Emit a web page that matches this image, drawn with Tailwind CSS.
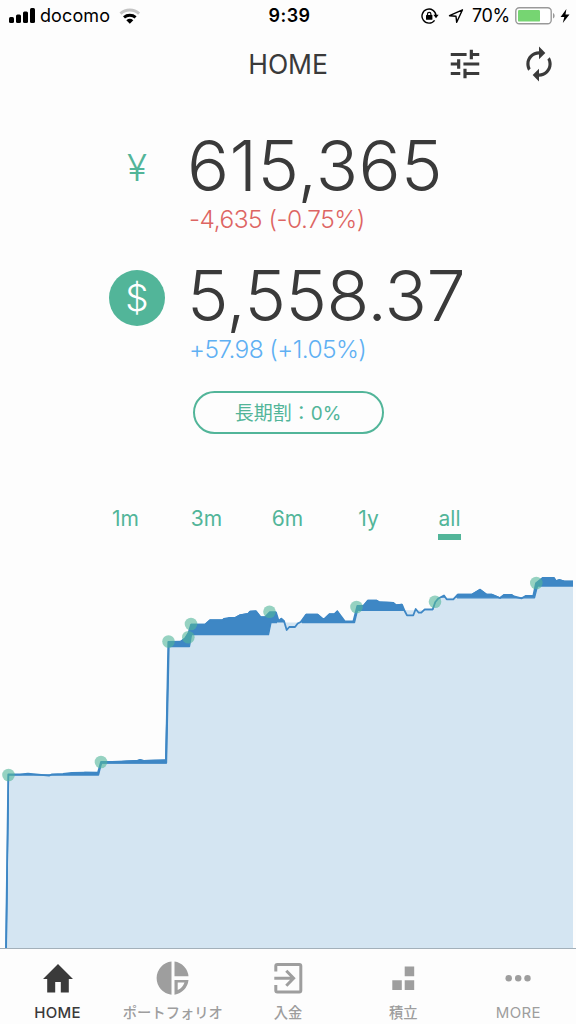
<!DOCTYPE html>
<html lang="ja">

<head>
    <meta charset="UTF-8">
    <meta name="viewport" content="width=device-width, initial-scale=1.0">
    <script src="https://cdn.jsdelivr.net/npm/@tailwindcss/browser@4"></script>
    <title>HOME</title>
</head>

<body class="bg-[#fdfdfd] font-['Inter','Noto_Sans_CJK_JP',sans-serif] text-[#3a3a3a]">
    <div class="flex flex-col w-[576px] h-[1024px] overflow-hidden">
        <!-- Status bar -->
        <div class="grid grid-cols-[1fr_auto_1fr] items-center h-8 pl-2 pr-1.5 text-black shrink-0">
            <div class="flex items-center">
                <svg class="w-7 h-4" viewBox="0 0 28 16">
                    <rect x="1" y="9" width="5" height="6" rx="1.5" />
                    <rect x="8" y="6.500" width="5" height="8.500" rx="1.500" />
                    <rect x="15" y="3.500" width="5" height="11.500" rx="1.500" />
                    <rect x="22" y="0" width="5" height="15" rx="1.500" />
                </svg>
                <span class="ml-1 w-[74px] text-[18px] tracking-[0.1px] leading-none">docomo</span>
                <svg class="ml-1 w-6 h-4" viewBox="0 0 24 16" fill="none">
                    <path d="M2.500 5.600a14 14 0 0 1 18.600 0" stroke="#c4c4c4" stroke-width="3" />
                    <path d="M6 9.400a9 9 0 0 1 11.600 0" stroke="#000" stroke-width="3" />
                    <path d="M8.300 12.300a5.400 5.400 0 0 1 7 0L11.800 15.800z" fill="#000" />
                </svg>
            </div>
            <div class="pl-px text-[18px] font-semibold leading-none tracking-[0.4px]">9:39</div>
            <div class="flex items-center justify-end">
                <svg class="w-[18px] h-4" viewBox="0 0 18 16" fill="none">
                    <path d="M13.600 12.300A7 7 0 1 1 15 8" stroke="#000" stroke-width="1.400" />
                    <path d="M12.400 6.800h5.200L15 10.200z" fill="#000" />
                    <rect x="5" y="7" width="6.400" height="4.800" rx=".6" fill="#000" />
                    <path d="M6.500 7.500V6a1.700 1.700 0 0 1 3.400 0v1.500" stroke="#000" stroke-width="1.200" />
                </svg>
                <svg class="ml-[9px] w-4 h-4" viewBox="0 0 16 16" fill="none">
                    <path d="M14.500 1.800L1.500 7.700l6.500.600.700 6z" stroke="#000" stroke-width="1.400" stroke-linejoin="round" />
                </svg>
                <span class="ml-2 text-[18px] leading-none tracking-[-0.3px]">70%</span>
                <svg class="ml-[5px] w-[41px] h-[18px]" viewBox="0 0 41 18">
                    <rect x=".8" y=".8" width="35.400" height="16" rx="3.500" fill="#fff" stroke="#999" stroke-width="1.400" />
                    <rect x="3" y="3" width="22" height="11.600" rx="1.200" fill="#76d572" />
                    <path d="M38 6v5.600c2.200-1 2.200-4.600 0-5.600z" fill="#999" />
                </svg>
                <svg class="ml-1 w-[10px] h-4" viewBox="0 0 10 16">
                    <path d="M6.400 1L.6 9h3.700L2.800 15 9.500 6.600H5.500z" />
                </svg>
            </div>
        </div>

        <!-- Header -->
        <div class="grid grid-cols-3 items-center h-16 shrink-0">
            <div></div>
            <h1 class="text-center text-[26.500px] tracking-[-0.1px] mt-px">HOME</h1>
            <div class="flex items-center justify-end pr-[18px] gap-[36px]">
                <svg class="w-[38px] h-[38px]" viewBox="0 0 24 24" fill="#3a3a3a">
                    <path d="M3 17v2h6v-2H3zM3 5v2h10V5H3zm10 16v-2h8v-2h-8v-2h-2v6h2zM7 9v2H3v2h4v2h2V9H7zm14 4v-2H11v2h10zm-6-4h2V7h4V5h-4V3h-2v6z" />
                </svg>
                <svg class="w-[38px] h-[38px]" viewBox="0 0 24 24" fill="#3a3a3a">
                    <path d="M12 6v3l4-4-4-4v3c-4.420 0-8 3.580-8 8 0 1.570.46 3.030 1.240 4.260L6.700 14.800A5.870 5.870 0 0 1 6 12c0-3.310 2.690-6 6-6zm6.760 1.740L17.300 9.200c.44.84.7 1.790.7 2.800 0 3.310-2.690 6-6 6v-3l-4 4 4 4v-3c4.420 0 8-3.580 8-8 0-1.570-.46-3.030-1.240-4.260z" />
                </svg>
            </div>
        </div>

        <!-- Balances -->
        <div class="flex h-[130px] pt-[34px] shrink-0">
            <div class="ml-[109px] mt-[10px] flex items-center justify-center w-14 h-14 text-[37px] font-light text-[#52b599]">¥</div>
            <div class="ml-[22px]">
                <div class="h-[72px] text-[70px] leading-[72px] font-light tracking-[0.400px] whitespace-nowrap">615,365</div>
                <div class="ml-[2px] mt-[5px] text-[24.500px] leading-[24px] font-light tracking-[-0.500px] text-[#dd6563]">-4,635 (-0.75%)</div>
            </div>
        </div>
        <div class="flex h-[165px] pt-[34px] shrink-0">
            <div class="ml-[109px] mt-[10px] flex items-center justify-center w-14 h-14 rounded-full bg-[#52b599] text-[37px] font-light text-white">$</div>
            <div class="ml-[22px]">
                <div class="h-[72px] text-[70px] leading-[72px] font-light tracking-[-0.500px] whitespace-nowrap">5,558.37</div>
                <div class="ml-[2px] mt-[5px] text-[24.500px] leading-[24px] font-light tracking-[-0.600px] text-[#5fb0f3]">+57.98 (+1.05%)</div>
            </div>
        </div>
        <div class="flex justify-center h-[44px] shrink-0">
            <div class="flex items-center justify-center w-[191px] h-[43px] pt-[3px] border-2 border-[#52b599] rounded-full text-[19px] text-[#52b599]">長期割：0%</div>
        </div>

        <!-- Range tabs -->
        <div class="flex justify-center mt-[70px] pr-px h-[56px] text-[21px] leading-[28px] text-[#52b599] shrink-0">
            <div class="w-[81px] text-center">1m</div>
            <div class="w-[81px] text-center">3m</div>
            <div class="w-[81px] text-center">6m</div>
            <div class="w-[81px] text-center">1y</div>
            <div class="w-[81px] flex flex-col items-center">all<span class="mt-[1px] w-[23px] h-[6px] bg-[#52b599]"></span></div>
        </div>

        <!-- Chart -->
        <svg class="w-[576px] h-[387px] shrink-0" viewBox="0 561 576 387">
            <!-- value -->
            <path fill="#3e87c5" d="M6 948L8.300 774.300H20L28 773.700 49 775.700 52 774.300 63 774 72 772.500 82 772.300 85 771.800 98 772 101 762H112L126 760.500 137 760 140 759 144 760 165 759.300 168.300 641 180.700 640.700 185 637.500 188.500 632 191 623.700H205L210 619.300H222.500L224 618 227 618.700 229.300 617H235L240 614.300 248 613 250 610.700 256 610.300 260.700 616.300H265L269.500 611.500H276L278.700 621 281.300 617.700 284 621 286.700 630 289.300 627H295L297.700 623.500 300.700 622 306 613.700H317.700L322.700 618H324.500L329.300 613.300H334.300L337.300 610.300 345 621.500H353.300L357.300 606 363.300 605 367.700 599.700H376.700L379.300 601.300 393.300 602 396 604.300 402 603.700 404.700 611 407 615.300H413.300L415.700 609 418.700 612.700H421.300L424.700 609.300H432.700L435.300 602 438.300 598.500 444 595 446.700 599.300H453.300L457.700 593.700H471.700L480 588.700 486.700 593.700H491.700L500 597.300 504 594H511.700L514 596 521.700 598.300 526 595.300H533.300L536 583.300 542.700 577H554L556 580.300 559.300 579 565 580.700H573V948z" />
            <!-- principal -->
            <path fill="#d4e5f2" d="M7 948L9 775H98.500L101.500 763.500H166.500L169 646.500H189.500L191.500 635H268.500L271 622.500H354.500L357.500 610.300H433L437 597.800H534.500L537.500 586H573V948z" />
            <path fill="none" stroke="#3e87c5" stroke-width="1.300" stroke-linejoin="round" d="M6 948L8.500 775H98.500L101.500 763H166.500L169 646.500H189.500L191.500 634.500H268.500L271 622.500H277M302 622.500H354.500L357.500 610.300H404M457 597.800H534.500L537.500 586H573" />
            <path fill="none" stroke="#3e87c5" stroke-width="1.800" stroke-linejoin="round" d="M6 948L8.300 774.300H20L28 773.700 49 775.700 52 774.300 63 774 72 773 98 772.500 101 762H112L126 761.500 137 761 140 760 144 761 166 760.300 168.300 642 180.700 641.700 185 638.500 188.500 633 191 624.700H205L210 620.300H222.500L224 619 229.300 618H235L240 615.300 248 614 250 611.700 256 611.300 260.700 617.300H265L269.500 612.500H276L278.700 621 281.300 618.700 284 621 286.700 630 289.300 627H295L297.700 623.500 300.700 622 306 614.700H317.700L322.700 619H324.500L329.300 614.300H334.300L337.300 611.300 345 621.500H353.300L357.300 606 363.300 606 367.700 600.700H376.700L379.300 602.300 393.300 603 396 605.300 402 604.700 404.700 611 407 615.300H413.300L415.700 609 418.700 612.700H421.300L424.700 609.300H432.700L435.300 602 438.300 598.500 444 595.500 446.700 599.300H453.300L457.700 594.700H471.700L480 589.700 486.700 594.700H491.700L500 598 504 595H511.700L514 596.500 521.700 598.300 526 595.800H533.300L536 583.300 542.700 578H554L556 581 559.300 580 565 581.500H573" />
            <!-- deposits -->
            <g fill="#52b599" fill-opacity=".6">
                <circle cx="8.500" cy="775" r="6.300" />
                <circle cx="101" cy="762" r="6.300" />
                <circle cx="168.500" cy="641.500" r="6.300" />
                <circle cx="188.300" cy="637.300" r="6.300" />
                <circle cx="191" cy="624" r="6.300" />
                <circle cx="269.500" cy="611.700" r="6.300" />
                <circle cx="356.500" cy="607" r="6.300" />
                <circle cx="435" cy="601.700" r="6.300" />
                <circle cx="536.300" cy="583" r="6.300" />
            </g>
        </svg>

        <!-- Tab bar -->
        <nav class="grid grid-cols-5 h-[76px] pt-[9px] border-t border-[#a3b0ba] text-[14.300px] font-medium text-[#9e9e9e] whitespace-nowrap shrink-0">
            <div class="flex flex-col items-center text-[#3a3a3a]">
                <svg class="w-10 h-10" viewBox="0 0 40 40" fill="#3a3a3a">
                    <path d="M20 6L5 21h4.200v13.500h8V24h5.600v10.500h8V21H35z" />
                </svg>
                <span class="mt-[5px] leading-5 text-[15px] tracking-[0.300px]">HOME</span>
            </div>
            <div class="flex flex-col items-center">
                <svg class="w-10 h-10" viewBox="0 0 40 40" fill="#9e9e9e">
                    <path d="M18.500 3.500v33.200a16.700 16.700 0 0 1 0-33.200zM21.500 3.500A16.500 16.500 0 0 1 35.500 18.300h-14z" />
                    <path fill-rule="evenodd" d="M21.500 22h14a16.500 16.500 0 0 1-14 14.700zM24.700 24.500v7.500c3.600-1.500 5.400-4 6.800-7.500z" />
                </svg>
                <span class="mt-[5px] leading-5">ポートフォリオ</span>
            </div>
            <div class="flex flex-col items-center">
                <svg class="w-10 h-10" viewBox="0 0 40 40" fill="none" stroke="#9e9e9e" stroke-width="3">
                    <path d="M7.800 13.500V8a1.500 1.500 0 0 1 1.500-1.500h22A1.500 1.500 0 0 1 32.800 8v24.500a1.500 1.500 0 0 1-1.500 1.500h-22a1.500 1.500 0 0 1-1.500-1.500V27" />
                    <path d="M6.300 20.200H25M18.300 12.700l7.300 7.500-7.300 7.500" />
                </svg>
                <span class="mt-[5px] leading-5">入金</span>
            </div>
            <div class="flex flex-col items-center">
                <svg class="w-10 h-10" viewBox="0 0 40 40" fill="#9e9e9e">
                    <path d="M21.700 8.500h9.500v9.800h-9.500zM9.300 22.200h9.500v9.800H9.300zM21.700 22.200h9.500v9.800h-9.500z" />
                </svg>
                <span class="mt-[5px] leading-5">積立</span>
            </div>
            <div class="flex flex-col items-center">
                <svg class="w-10 h-10" viewBox="0 0 40 40" fill="#9e9e9e">
                    <circle cx="10.700" cy="20.200" r="3.200" />
                    <circle cx="20.200" cy="20.200" r="3.200" />
                    <circle cx="29.500" cy="20.200" r="3.200" />
                </svg>
                <span class="mt-[5px] leading-5 text-[15px] font-normal tracking-[0.400px]">MORE</span>
            </div>
        </nav>
    </div>
</body>

</html>
